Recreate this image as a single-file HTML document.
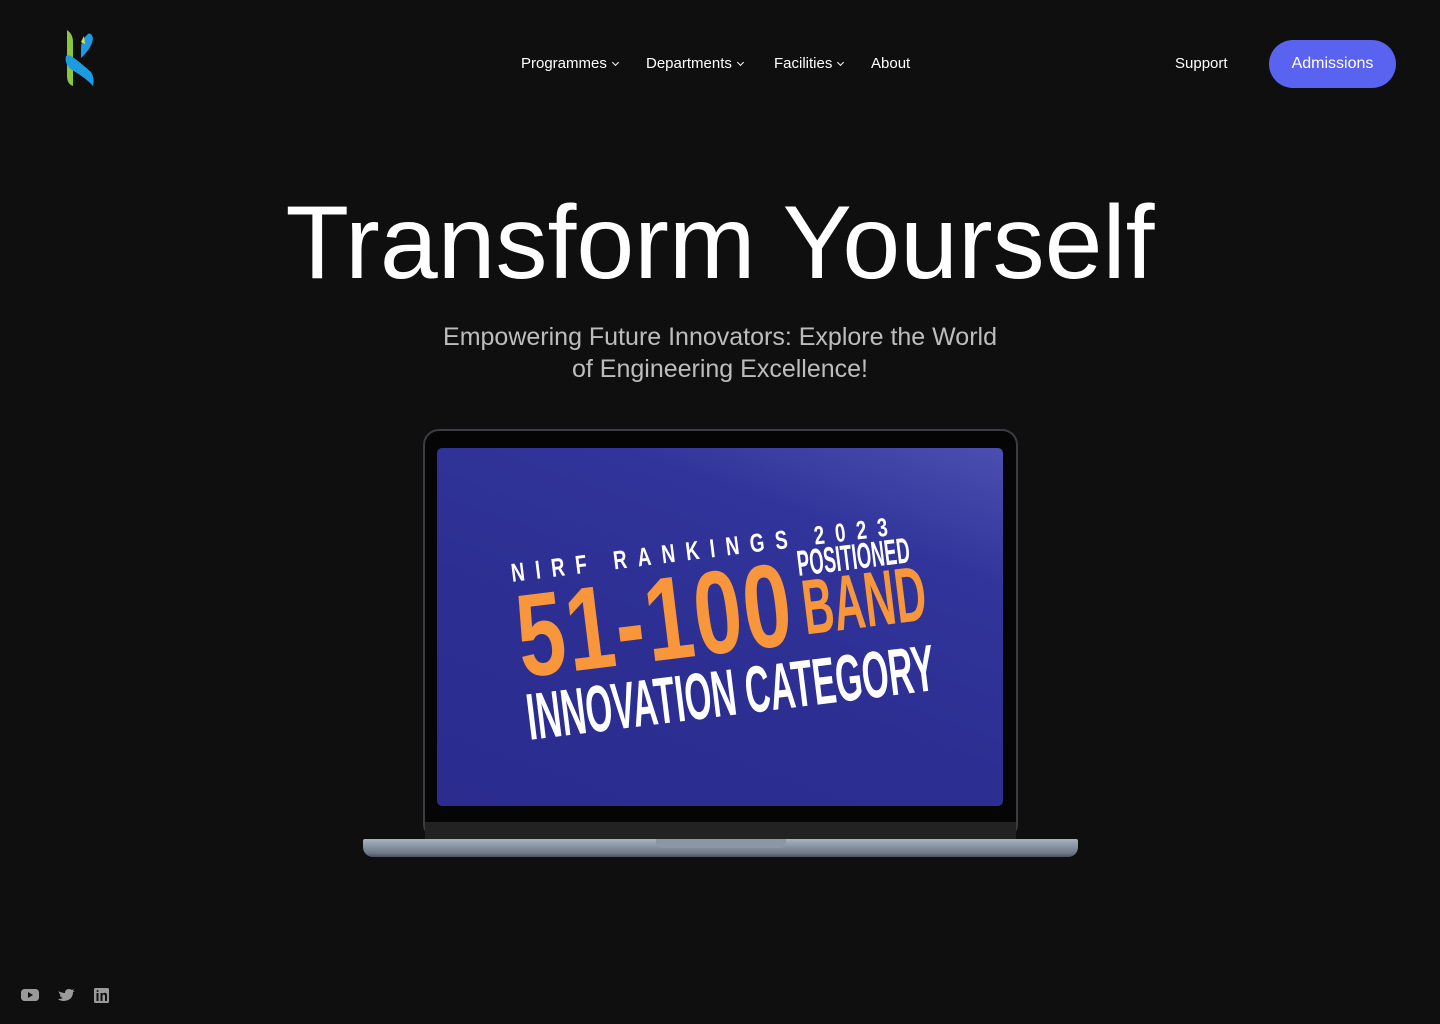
<!DOCTYPE html>
<html><head><meta charset="utf-8"><style>
*{margin:0;padding:0;box-sizing:border-box}
body{width:1440px;height:1024px;background:#0f0f0f;font-family:"Liberation Sans",sans-serif;color:#fff;position:relative;overflow:hidden}
.nav{position:absolute;top:55px;font-size:15px;color:#fff}
.nav span{position:absolute;white-space:nowrap}
.car{display:inline-block;width:5px;height:5px;border-right:1.5px solid #fff;border-bottom:1.5px solid #fff;transform:rotate(45deg);margin-left:6px;position:relative;top:-3px}
.btn{position:absolute;left:1269px;top:40px;width:127px;height:48px;border-radius:24px;background:#5a63f0;color:#fff;font-size:16px;text-align:center;line-height:48px}
h1{position:absolute;top:184px;width:100%;text-align:center;font-weight:400;font-size:104px;letter-spacing:0px}
.sub{position:absolute;top:321px;width:100%;text-align:center;font-size:25px;line-height:32px;color:#bdbdbd}
.lap{position:absolute;left:423px;top:429px;width:595px;height:411px;border-radius:16px;background:#050505;border:2px solid #3a3d42}
.scr{position:absolute;left:437px;top:448px;width:566px;height:358px;border-radius:5px;background:linear-gradient(200deg,#4a4fb0 0%,#31349a 25%,#2c2e92 60%,#2b2c8e 100%);overflow:hidden}
.chin{position:absolute;left:425px;top:822px;width:591px;height:17px;background:#222;}
.base{position:absolute;left:363px;top:839px;width:715px;height:18px;border-radius:2px 2px 10px 10px;background:linear-gradient(#a8b3c0,#6c7785 80%,#4a525c)}
.notch{position:absolute;left:656px;top:839px;width:130px;height:9px;border-radius:0 0 6px 6px;background:#8c97a5}
.t{position:absolute;transform-origin:left bottom;font-weight:700;white-space:nowrap;font-family:"Liberation Sans Narrow","Liberation Sans",sans-serif}
</style></head><body>
<svg style="position:absolute;left:60px;top:26px" width="40" height="64" viewBox="0 0 40 64">
<path d="M7 4 Q13 8 13 16 L13 60 Q7 58 7 50 Z" fill="#8cc63f"/>
<path d="M33 12 Q31 6 28 8 Q21 14 21 22 L21 32 Q32 22 33 12Z" fill="#1e9ae0"/>
<path d="M21 16 L24 10 L25 18 Z" fill="#d6e23a"/>
<path d="M6 30 Q4 38 12 44 Q26 52 33 60 Q35 52 31 46 Q22 38 14 32 Q9 28 6 30Z" fill="#1e9ae0"/>
</svg>
<div class="nav"><span style="left:521px">Programmes<i class="car"></i></span><span style="left:646px">Departments<i class="car"></i></span><span style="left:774px">Facilities<i class="car"></i></span><span style="left:871px">About</span><span style="left:1175px">Support</span></div>
<div class="btn">Admissions</div>
<h1>Transform Yourself</h1>
<div class="sub">Empowering Future Innovators: Explore the World<br>of Engineering Excellence!</div>
<div class="lap"></div>
<div class="chin"></div>
<div class="scr">
<div style="position:absolute;left:0;top:0;width:566px;height:358px;transform:rotate(-7deg);transform-origin:80px 230px">
<div class="t" style="left:87px;top:110px;font-size:26px;letter-spacing:15px;transform:scaleX(.72)">NIRF RANKINGS 2023</div>
<div class="t" style="left:85px;top:122px;font-size:118px;color:#f7963a;letter-spacing:2px;transform:scaleX(.73)">51-100</div>
<div class="t" style="left:372px;top:130px;font-size:36px;transform:scaleX(.51)">POSITIONED</div>
<div class="t" style="left:372px;top:150px;font-size:78px;color:#f7963a;transform:scaleX(.55)">BAND</div>
<div class="t" style="left:85px;top:232px;font-size:66px;transform:scaleX(.52)">INNOVATION CATEGORY</div>
</div></div>
<div class="base"></div><div class="notch"></div>
<svg style="position:absolute;left:21px;top:987px" width="100" height="16" viewBox="0 0 100 16" fill="#9a9a9a">
<rect x="0" y="2" width="18" height="12" rx="3.5"/><path d="M7 5 L12 8 L7 11Z" fill="#0f0f0f"/>
<path d="M37 4 Q41 6 44 6 Q44 2 48 2 Q50 2 51 3 L53 2 L52 4 L54 4 L52 5 Q52 13 43 14 Q39 14 37 12 Q40 12 42 11 Q39 10 39 8 L40 8 Q38 7 38 5 Z"/>
<rect x="73" y="1" width="15" height="15" rx="1.5"/><path d="M75.5 6h2v8h-2zM79.5 6h2v1q1-1.3 2.5-1.2 2 .2 2 2.7v5.5h-2v-5q0-1.5-1.2-1.5-1.3 0-1.3 1.5v5h-2z" fill="#0f0f0f"/><circle cx="76.5" cy="4" r="1" fill="#0f0f0f"/>
</svg>
</body></html>
